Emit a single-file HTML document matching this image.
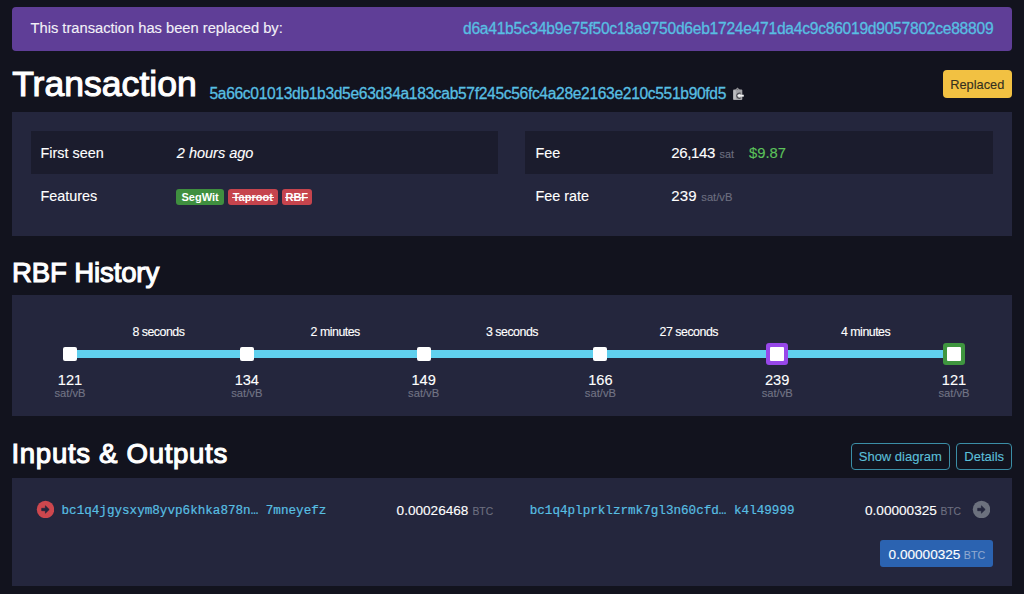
<!DOCTYPE html>
<html><head><meta charset="utf-8"><style>
html,body{margin:0;padding:0;}
body{width:1024px;height:594px;background:#12131e;position:relative;overflow:hidden;font-family:"Liberation Sans",sans-serif;}
.t{position:absolute;line-height:1;white-space:pre;-webkit-text-stroke-width:0.12px;}
.r{position:absolute;}
</style></head><body>
<div class="r" style="left:12px;top:6.5px;width:1000px;height:44px;background:#5f3e97;border-radius:4px;"></div>
<div class="t" style="left:30.50px;top:21.46px;font-size:14.7px;color:#f2f0f7;font-weight:400;font-style:normal;font-family:'Liberation Sans';">This transaction has been replaced by:</div>
<div class="t" style="left:-6.70px;width:1000px;text-align:right;top:20.99px;font-size:15.6px;color:#58bfe2;font-weight:400;font-style:normal;font-family:'Liberation Sans';letter-spacing:-0.25px;-webkit-text-stroke-width:0.3px;">d6a41b5c34b9e75f50c18a9750d6eb1724e471da4c9c86019d9057802ce88809</div>
<div class="t" style="left:12.20px;top:67.46px;font-size:35.6px;color:#fff;font-weight:400;font-style:normal;font-family:'Liberation Sans';-webkit-text-stroke:1.1px #fff;">Transaction</div>
<div class="t" style="left:209.50px;top:86.09px;font-size:15.6px;color:#58bfe2;font-weight:400;font-style:normal;font-family:'Liberation Sans';letter-spacing:-0.33px;-webkit-text-stroke-width:0.3px;">5a66c01013db1b3d5e63d34a183cab57f245c56fc4a28e2163e210c551b90fd5</div>
<svg class="r" style="left:726px;top:82px" width="24" height="22" viewBox="0 0 24 22">
<rect x="7" y="7.4" width="9.3" height="10.6" rx="1" fill="#a3a3a7"/>
<rect x="7.8" y="8.2" width="2" height="9" fill="#bdbdc0"/>
<path d="M8.8 8.2 L11.5 5.6 L14.2 8.2 Z" fill="#9a9a9e"/>
<path d="M10.6 7.6 L11.5 6.7 L12.4 7.6 Z" fill="#4a4a50"/>
<path d="M14.6 11.4 A2.6 2.6 0 1 0 14.6 16" stroke="#4a4a50" stroke-width="1.2" fill="none"/>
<path d="M13 13.7 H17.8" stroke="#f4f4f4" stroke-width="1.9"/>
<path d="M11.2 13.7 L13.6 11.8 L13.6 15.6 Z" fill="#f4f4f4"/>
</svg>
<div class="r" style="left:942.5px;top:70.3px;width:69.7px;height:27.5px;background:#f2c142;border-radius:4px;"></div>
<div class="t" style="left:477.30px;width:1000px;text-align:center;top:78.96px;font-size:12.8px;color:#35301f;font-weight:400;font-style:normal;font-family:'Liberation Sans';">Replaced</div>
<div class="r" style="left:12px;top:112px;width:1000px;height:123.5px;background:#24263d;border-radius:0px;"></div>
<div class="r" style="left:31px;top:131px;width:467px;height:43px;background:#1b1c2d;border-radius:0px;"></div>
<div class="r" style="left:525px;top:131px;width:468px;height:43px;background:#1b1c2d;border-radius:0px;"></div>
<div class="t" style="left:40.50px;top:146.21px;font-size:14.4px;color:#fff;font-weight:400;font-style:normal;font-family:'Liberation Sans';">First seen</div>
<div class="t" style="left:176.80px;top:146.13px;font-size:14.5px;color:#fff;font-weight:400;font-style:italic;font-family:'Liberation Sans';">2 hours ago</div>
<div class="t" style="left:40.50px;top:189.11px;font-size:14.4px;color:#fff;font-weight:400;font-style:normal;font-family:'Liberation Sans';">Features</div>
<div class="r" style="left:176.4px;top:189px;width:47.400000000000006px;height:16px;background:#3f8f3f;border-radius:3px;"></div>
<div class="t" style="left:-299.90px;width:1000px;text-align:center;top:192.29px;font-size:11px;color:#fff;font-weight:700;font-style:normal;font-family:'Liberation Sans';-webkit-text-stroke-width:0;">SegWit</div>
<div class="r" style="left:228px;top:189px;width:49.5px;height:16px;background:#c6444d;border-radius:3px;"></div>
<div class="t" style="left:-247.25px;width:1000px;text-align:center;top:192.29px;font-size:11px;color:#fff;font-weight:700;font-style:normal;font-family:'Liberation Sans';-webkit-text-stroke-width:0;">Taproot</div>
<div class="r" style="left:231.5px;top:196.6px;width:42.5px;height:1.1px;background:rgba(255,255,255,0.9);border-radius:0px;"></div>
<div class="r" style="left:281.9px;top:189px;width:29.700000000000045px;height:16px;background:#c6444d;border-radius:3px;"></div>
<div class="t" style="left:-203.25px;width:1000px;text-align:center;top:192.29px;font-size:11px;color:#fff;font-weight:700;font-style:normal;font-family:'Liberation Sans';-webkit-text-stroke-width:0;">RBF</div>
<div class="r" style="left:285.4px;top:196.6px;width:22.700000000000045px;height:1.1px;background:rgba(255,255,255,0.9);border-radius:0px;"></div>
<div class="t" style="left:535.50px;top:146.21px;font-size:14.4px;color:#fff;font-weight:400;font-style:normal;font-family:'Liberation Sans';">Fee</div>
<div class="t" style="left:671.30px;top:145.00px;font-size:15px;color:#fff;font-weight:400;font-style:normal;font-family:'Liberation Sans';letter-spacing:-0.37px;">26,143</div>
<div class="t" style="left:719.50px;top:148.86px;font-size:10.8px;color:#6d6f80;font-weight:400;font-style:normal;font-family:'Liberation Sans';">sat</div>
<div class="t" style="left:749.00px;top:145.87px;font-size:14.8px;color:#5cc25b;font-weight:400;font-style:normal;font-family:'Liberation Sans';">$9.87</div>
<div class="t" style="left:535.50px;top:189.11px;font-size:14.4px;color:#fff;font-weight:400;font-style:normal;font-family:'Liberation Sans';">Fee rate</div>
<div class="t" style="left:671.30px;top:188.30px;font-size:15px;color:#fff;font-weight:400;font-style:normal;font-family:'Liberation Sans';letter-spacing:0.15px;">239</div>
<div class="t" style="left:701.30px;top:191.82px;font-size:11.2px;color:#6d6f80;font-weight:400;font-style:normal;font-family:'Liberation Sans';">sat/vB</div>
<div class="t" style="left:12.00px;top:259.14px;font-size:27.6px;color:#fff;font-weight:400;font-style:normal;font-family:'Liberation Sans';-webkit-text-stroke:1.1px #fff;letter-spacing:-0.15px;">RBF History</div>
<div class="r" style="left:12px;top:295px;width:1000px;height:121px;background:#24263d;border-radius:0px;"></div>
<div class="r" style="left:70px;top:350px;width:884px;height:8px;background:#60d0ee;border-radius:0px;"></div>
<div class="r" style="left:63px;top:347px;width:14px;height:14px;background:#fff;border-radius:2px;"></div>
<div class="t" style="left:-430.00px;width:1000px;text-align:center;top:372.94px;font-size:14.6px;color:#fff;font-weight:400;font-style:normal;font-family:'Liberation Sans';">121</div>
<div class="t" style="left:-430.00px;width:1000px;text-align:center;top:388.22px;font-size:11.2px;color:#727485;font-weight:400;font-style:normal;font-family:'Liberation Sans';">sat/vB</div>
<div class="r" style="left:239.8px;top:347px;width:14px;height:14px;background:#fff;border-radius:2px;"></div>
<div class="t" style="left:-253.20px;width:1000px;text-align:center;top:372.94px;font-size:14.6px;color:#fff;font-weight:400;font-style:normal;font-family:'Liberation Sans';">134</div>
<div class="t" style="left:-253.20px;width:1000px;text-align:center;top:388.22px;font-size:11.2px;color:#727485;font-weight:400;font-style:normal;font-family:'Liberation Sans';">sat/vB</div>
<div class="r" style="left:416.6px;top:347px;width:14px;height:14px;background:#fff;border-radius:2px;"></div>
<div class="t" style="left:-76.40px;width:1000px;text-align:center;top:372.94px;font-size:14.6px;color:#fff;font-weight:400;font-style:normal;font-family:'Liberation Sans';">149</div>
<div class="t" style="left:-76.40px;width:1000px;text-align:center;top:388.22px;font-size:11.2px;color:#727485;font-weight:400;font-style:normal;font-family:'Liberation Sans';">sat/vB</div>
<div class="r" style="left:593.4px;top:347px;width:14px;height:14px;background:#fff;border-radius:2px;"></div>
<div class="t" style="left:100.40px;width:1000px;text-align:center;top:372.94px;font-size:14.6px;color:#fff;font-weight:400;font-style:normal;font-family:'Liberation Sans';">166</div>
<div class="t" style="left:100.40px;width:1000px;text-align:center;top:388.22px;font-size:11.2px;color:#727485;font-weight:400;font-style:normal;font-family:'Liberation Sans';">sat/vB</div>
<div class="r" style="left:766.2px;top:343px;width:22px;height:22px;background:#9747e9;border-radius:3px;"></div>
<div class="r" style="left:770.2px;top:347px;width:14px;height:14px;background:#fff;border-radius:1px;"></div>
<div class="t" style="left:277.20px;width:1000px;text-align:center;top:372.94px;font-size:14.6px;color:#fff;font-weight:400;font-style:normal;font-family:'Liberation Sans';">239</div>
<div class="t" style="left:277.20px;width:1000px;text-align:center;top:388.22px;font-size:11.2px;color:#727485;font-weight:400;font-style:normal;font-family:'Liberation Sans';">sat/vB</div>
<div class="r" style="left:943px;top:343px;width:22px;height:22px;background:#3f963f;border-radius:3px;"></div>
<div class="r" style="left:947px;top:347px;width:14px;height:14px;background:#fff;border-radius:1px;"></div>
<div class="t" style="left:454.00px;width:1000px;text-align:center;top:372.94px;font-size:14.6px;color:#fff;font-weight:400;font-style:normal;font-family:'Liberation Sans';">121</div>
<div class="t" style="left:454.00px;width:1000px;text-align:center;top:388.22px;font-size:11.2px;color:#727485;font-weight:400;font-style:normal;font-family:'Liberation Sans';">sat/vB</div>
<div class="t" style="left:-341.60px;width:1000px;text-align:center;top:325.90px;font-size:12.4px;color:#fff;font-weight:400;font-style:normal;font-family:'Liberation Sans';letter-spacing:-0.5px;">8 seconds</div>
<div class="t" style="left:-164.80px;width:1000px;text-align:center;top:325.90px;font-size:12.4px;color:#fff;font-weight:400;font-style:normal;font-family:'Liberation Sans';letter-spacing:-0.5px;">2 minutes</div>
<div class="t" style="left:12.00px;width:1000px;text-align:center;top:325.90px;font-size:12.4px;color:#fff;font-weight:400;font-style:normal;font-family:'Liberation Sans';letter-spacing:-0.5px;">3 seconds</div>
<div class="t" style="left:188.80px;width:1000px;text-align:center;top:325.90px;font-size:12.4px;color:#fff;font-weight:400;font-style:normal;font-family:'Liberation Sans';letter-spacing:-0.5px;">27 seconds</div>
<div class="t" style="left:365.60px;width:1000px;text-align:center;top:325.90px;font-size:12.4px;color:#fff;font-weight:400;font-style:normal;font-family:'Liberation Sans';letter-spacing:-0.5px;">4 minutes</div>
<div class="t" style="left:11.50px;top:439.94px;font-size:27.6px;color:#fff;font-weight:400;font-style:normal;font-family:'Liberation Sans';-webkit-text-stroke:1.1px #fff;letter-spacing:0.68px;">Inputs &amp; Outputs</div>
<div class="r" style="left:851px;top:442.7px;width:98.6px;height:27.7px;background:transparent;border-radius:4px;border:1.3px solid #3b8ea6;box-sizing:border-box;"></div>
<div class="t" style="left:400.30px;width:1000px;text-align:center;top:450.00px;font-size:13px;color:#5cbfd8;font-weight:400;font-style:normal;font-family:'Liberation Sans';">Show diagram</div>
<div class="r" style="left:956.4px;top:442.7px;width:55.7px;height:27.7px;background:transparent;border-radius:4px;border:1.3px solid #3b8ea6;box-sizing:border-box;"></div>
<div class="t" style="left:484.20px;width:1000px;text-align:center;top:450.00px;font-size:13px;color:#5cbfd8;font-weight:400;font-style:normal;font-family:'Liberation Sans';">Details</div>
<div class="r" style="left:12px;top:478px;width:1000px;height:107.5px;background:#24263d;border-radius:0px;"></div>
<svg class="r" style="left:36px;top:500px" width="18" height="18" viewBox="0 0 18 18">
<circle cx="9.5" cy="9.5" r="8.7" fill="#cd474e"/>
<path transform="translate(0.5 0.5)" d="M5.2 7.8 H8.9 V5.3 L12.7 9 L8.9 12.7 V10.2 H5.2 Z" fill="#24263d" stroke="#24263d" stroke-width="0.7" stroke-linejoin="round"/>
</svg>
<div class="t" style="left:61.50px;top:504.63px;font-size:12.62px;color:#58bfe2;font-weight:400;font-style:normal;font-family:'Liberation Mono';-webkit-text-stroke-width:0.2px;">bc1q4jgysxym8yvp6khka878n… 7mneyefz</div>
<div class="t" style="left:396.60px;top:503.69px;font-size:13.6px;color:#fff;font-weight:400;font-style:normal;font-family:'Liberation Sans';">0.00026468</div>
<div class="t" style="left:472.50px;top:506.98px;font-size:10.3px;color:#6d6f80;font-weight:400;font-style:normal;font-family:'Liberation Sans';">BTC</div>
<div class="t" style="left:529.70px;top:504.63px;font-size:12.62px;color:#58bfe2;font-weight:400;font-style:normal;font-family:'Liberation Mono';-webkit-text-stroke-width:0.2px;">bc1q4plprklzrmk7gl3n60cfd… k4l49999</div>
<div class="t" style="left:865.00px;top:503.69px;font-size:13.6px;color:#fff;font-weight:400;font-style:normal;font-family:'Liberation Sans';">0.00000325</div>
<div class="t" style="left:940.40px;top:506.98px;font-size:10.3px;color:#6d6f80;font-weight:400;font-style:normal;font-family:'Liberation Sans';">BTC</div>
<svg class="r" style="left:972px;top:500px" width="18" height="18" viewBox="0 0 18 18">
<circle cx="9.5" cy="9.5" r="8.75" fill="#6c717e"/>
<path transform="translate(0.5 0.5)" d="M5.2 7.8 H8.9 V5.3 L12.7 9 L8.9 12.7 V10.2 H5.2 Z" fill="#24263d" stroke="#24263d" stroke-width="0.7" stroke-linejoin="round"/>
</svg>
<div class="r" style="left:880.3px;top:540.4px;width:112.7px;height:27px;background:#2b63b1;border-radius:3px;"></div>
<div class="t" style="left:888.60px;top:548.09px;font-size:13.6px;color:#fff;font-weight:400;font-style:normal;font-family:'Liberation Sans';">0.00000325</div>
<div class="t" style="left:963.80px;top:550.14px;font-size:10.7px;color:#8fa8d0;font-weight:400;font-style:normal;font-family:'Liberation Sans';">BTC</div>

</body></html>
